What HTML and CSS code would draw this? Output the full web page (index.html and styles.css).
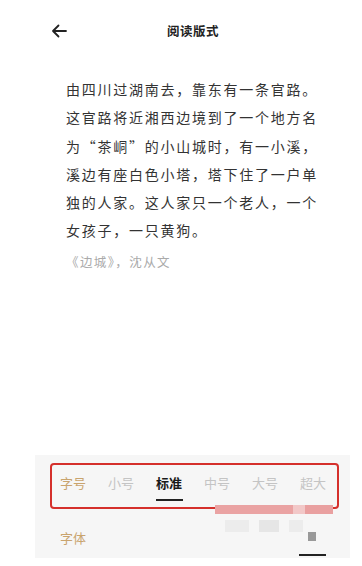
FILE: index.html
```html
<!DOCTYPE html>
<html lang="zh-CN">
<head>
<meta charset="utf-8">
<link rel="stylesheet" href="styles.css">
</head>
<body>
<div class="page">
  <header class="topbar">
    <svg class="back" width="16" height="14" viewBox="0 0 16 14"><path d="M15 7H2M7.5 1.5L2 7l5.5 5.5" fill="none" stroke="#222" stroke-width="1.8" stroke-linecap="round" stroke-linejoin="round"/></svg>
    <div class="title">阅读版式</div>
  </header>
  <main class="content">
    <p class="text">由四川过湖南去，靠东有一条官路。<br>这官路将近湘西边境到了一个地方名<br>为“茶峒”的小山城时，有一小溪，<br>溪边有座白色小塔，塔下住了一户单<br>独的人家。这人家只一个老人，一个<br>女孩子，一只黄狗。</p>
    <p class="cite">《边城》，沈从文</p>
  </main>
  <section class="panel">
    <div class="row sizes">
      <span class="label">字号</span>
      <span class="opt">小号</span>
      <span class="opt active">标准</span>
      <span class="opt">中号</span>
      <span class="opt">大号</span>
      <span class="opt">超大</span>
    </div>
    <div class="row fonts">
      <span class="label">字体</span>
      <div class="fontpick"><span class="sq"></span><span class="uline"></span></div>
    </div>
    <div class="blur"><span class="g1"></span><span class="g2"></span><span class="g3"></span></div>
    <div class="mark"></div>
    <div class="wm"><span class="b1"></span><span class="b2"></span><span class="b3"></span></div>
  </section>
</div>
</body>
</html>
```
FILE: styles.css
```css
* { box-sizing: border-box; }
html, body { margin: 0; padding: 0; background: #fff; }
body { font-family: "Noto Sans CJK SC", "Noto Sans", sans-serif; }
.page { width: 362px; height: 566px; display: flex; flex-direction: column; }
.topbar { height: 60px; display: flex; align-items: center; padding-left: 51px; }
.back { display: block; margin-top: 1px; }
.title { margin-left: 100px; font-size: 12.5px; font-weight: 700; color: #222; letter-spacing: 0.5px; }
.content { padding-left: 66px; padding-top: 15px; }
.text { margin: 0; font-size: 14px; line-height: 28.3px; letter-spacing: 1.75px; color: #333; white-space: nowrap; }
.cite { margin: 7px 0 0; font-size: 12.5px; line-height: 20px; color: #aaa; letter-spacing: 1.4px; }
.panel { position: relative; margin: auto 12px 8px 35px; height: 103px; background: #f6f6f6; }
.row { display: flex; padding-left: 25px; }
.sizes { height: 56px; gap: 21px; align-items: center; }
.sizes span { font-size: 13px; line-height: 18px; position: relative; width: 27px; }
.label { color: #c9a46e; font-size: 13px; line-height: 18px; }
.opt { color: #c4c4c4; }
.opt.active { color: #1a1a1a; font-weight: 700; }
.opt.active::after { content: ""; position: absolute; left: 0; right: 0; top: 25px; height: 2px; background: #222; }
.fonts { height: 47px; justify-content: space-between; align-items: flex-start; padding-right: 24px; }
.fonts .label { margin-top: 18px; }
.fontpick { position: relative; width: 27px; height: 47px; }
.sq { position: absolute; left: 9px; top: 21px; width: 8px; height: 9px; background: #999; }
.uline { position: absolute; left: 0; right: 0; top: 43px; height: 2px; background: #222; }
.blur { position: absolute; left: 190px; top: 65px; display: flex; gap: 10px; }
.blur span { display: block; height: 12px; background: #ececec; }
.blur .g1 { width: 24px; }
.blur .g2 { width: 20px; background: #e6e6e6; }
.blur .g3 { width: 14px; }
.mark { position: absolute; left: 15px; top: 8px; width: 289px; height: 46px; border: 2.5px solid #d5302c; border-radius: 4px; }
.wm { position: absolute; left: 180px; top: 50px; width: 118px; height: 9px; display: flex; }
.wm .b1 { width: 78px; background: #eaa3a3; }
.wm .b2 { width: 12px; background: #f2c8c8; }
.wm .b3 { flex: 1; background: #e9a0a0; }
```
